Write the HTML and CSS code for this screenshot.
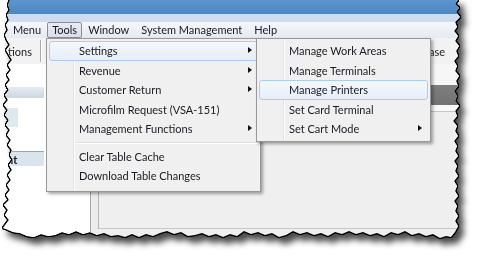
FILE: index.html
```html
<!DOCTYPE html>
<html lang="en">
<head>
    <meta charset="UTF-8">
    <title>Tools menu</title>
    <link rel="stylesheet" href="styles.css">
</head>
<body>

    <div class="sheet">
        <div class="paper">
            <div class="titlebar"></div>
            <div class="frame"></div>
            <div class="menubar">
                <span class="mb-item first">Menu</span>
                <span class="mb-item open">Tools</span>
                <span class="mb-item">Window</span>
                <span class="mb-item">System Management</span>
                <span class="mb-item">Help</span>
            </div>
            <div class="toolbar">
                <span class="tb-btn first">tions</span>
                <span class="tb-sep"></span>
                <span class="tb-btn last">ase</span>
            </div>
            <div class="work">
                <div class="tree">
                    <div class="tree-head"></div>
                    <div class="tree-box"></div>
                    <div class="tree-row">nt</div>
                </div>
                <div class="split"></div>
                <div class="pane">
                    <div class="pane-top"></div>
                    <div class="pane-head"></div>
                    <div class="pane-gap"></div>
                    <div class="pane-body"></div>
                </div>
            </div>

            <!-- Tools dropdown -->
            <div class="menu main-menu">
                <div class="item has-sub active">Settings</div>
                <div class="item has-sub">Revenue</div>
                <div class="item has-sub">Customer Return</div>
                <div class="item">Microfilm Request (VSA-151)</div>
                <div class="item has-sub">Management Functions</div>
                <div class="sep"></div>
                <div class="item">Clear Table Cache</div>
                <div class="item">Download Table Changes</div>
            </div>

            <!-- Settings submenu -->
            <div class="menu sub-menu">
                <div class="item">Manage Work Areas</div>
                <div class="item">Manage Terminals</div>
                <div class="item active">Manage Printers</div>
                <div class="item">Set Card Terminal</div>
                <div class="item has-sub">Set Cart Mode</div>
            </div>
        </div>
    </div>

</body>
</html>
```

FILE: styles.css
```css
body {
    margin: 0;
    background: #fff;
    font-family: Lato, "Open Sans", sans-serif;
    font-size: 11px;
    color: #1a1a22;
}
.sheet {
    width: 483px;
    height: 262px;
    filter: drop-shadow(1px 0 0 #000) drop-shadow(-1px 0 0 #000) drop-shadow(0 1px 0 #000) drop-shadow(0 -1px 0 #000) drop-shadow(5px 6px 3px rgba(0, 0, 0, 0.7));
}
.paper {
    position: relative;
    width: 470px;
    height: 245px;
    background: #efefef;
    display: flex;
    flex-direction: column;
    overflow: hidden;
    clip-path: polygon(9px -4px, 460px -4px, 458px 0px, 455px 4px, 459px 8px, 456px 12px, 460px 17px, 455px 22px, 457px 27px, 454px 31px, 458px 36px, 455px 41px, 459px 46px, 456px 51px, 458px 56px, 454px 61px, 457px 66px, 455px 71px, 459px 76px, 456px 81px, 458px 86px, 454px 91px, 457px 96px, 455px 101px, 459px 106px, 455px 111px, 457px 116px, 453px 121px, 457px 126px, 455px 131px, 458px 136px, 454px 141px, 457px 146px, 455px 151px, 458px 156px, 454px 161px, 457px 166px, 455px 171px, 458px 176px, 454px 181px, 457px 186px, 455px 191px, 458px 196px, 454px 201px, 457px 206px, 455px 211px, 458px 216px, 455px 221px, 458px 226px, 455px 232px, 451px 237px, 446px 236px, 440px 238px, 433px 234px, 426px 236px, 419px 233px, 412px 235px, 405px 231px, 398px 234px, 391px 232px, 384px 236px, 377px 233px, 370px 235px, 363px 232px, 356px 234px, 349px 231px, 342px 234px, 335px 232px, 328px 236px, 321px 233px, 314px 235px, 307px 232px, 300px 234px, 293px 231px, 286px 235px, 279px 237px, 272px 233px, 265px 235px, 258px 232px, 251px 234px, 244px 231px, 237px 236px, 230px 234px, 223px 237px, 216px 234px, 209px 236px, 202px 233px, 195px 235px, 188px 236px, 181px 232px, 174px 234px, 167px 231px, 160px 233px, 153px 236px, 146px 234px, 139px 237px, 132px 234px, 125px 237px, 118px 235px, 111px 236px, 104px 233px, 97px 235px, 90px 232px, 83px 234px, 76px 231px, 69px 234px, 62px 232px, 55px 235px, 48px 236px, 41px 234px, 34px 237px, 27px 236px, 20px 233px, 13px 232px, 6px 229px, 3px 228px, 6px 224px, 9px 220px, 5px 215px, 8px 210px, 4px 205px, 9px 200px, 6px 195px, 10px 190px, 7px 185px, 11px 180px, 8px 175px, 12px 170px, 9px 165px, 13px 160px, 10px 155px, 12px 150px, 8px 145px, 11px 140px, 7px 135px, 10px 130px, 6px 125px, 9px 120px, 5px 115px, 8px 110px, 4px 105px, 8px 100px, 5px 95px, 9px 90px, 6px 85px, 10px 80px, 7px 75px, 11px 70px, 8px 65px, 12px 60px, 9px 55px, 6px 50px, 10px 45px, 7px 40px, 5px 35px, 8px 30px, 6px 25px, 9px 20px, 7px 15px, 10px 10px, 8px 5px, 10px 0px);
}

/* window chrome */
.titlebar {
    height: 14px;
    background: linear-gradient(#5b95ce, #4b87c4);
}
.frame {
    height: 8px;
    background: #cddcee;
}
.menubar {
    height: 16px;
    display: flex;
    align-items: center;
    background: linear-gradient(#f5f7fb, #e4eaf2);
    white-space: nowrap;
}
.mb-item {
    padding: 0 5px;
    line-height: 14px;
    border: 1px solid transparent;
}
.mb-item.first {
    margin-left: 7px;
}
.mb-item.open {
    border-color: #8a8d92;
    border-radius: 2px;
    background: linear-gradient(#e9edf2, #d9dfe7);
    padding: 0 4px;
}

.toolbar {
    height: 26px;
    display: flex;
    align-items: center;
    background: #f2f2f2;
    padding-right: 25px;
    white-space: nowrap;
}
.tb-btn.first {
    margin-left: 8px;
}
.tb-sep {
    width: 1px;
    height: 22px;
    margin-left: 8px;
    background: #a9a9a9;
    box-shadow: 1px 0 0 #fff;
}
.tb-btn.last {
    margin-left: auto;
}

/* workspace under the menus */
.work {
    flex: 1;
    display: grid;
    grid-template-columns: 90px 8px 1fr;
}
.tree {
    background: #fff;
}
.tree-head {
    width: 44px;
    height: 11px;
    margin-top: 23px;
    background: linear-gradient(#e6ecf3, #cbd6e3);
}
.tree-box {
    width: 18px;
    height: 19px;
    margin-top: 10px;
    background: #dee9ef;
}
.tree-row {
    width: 44px;
    height: 15px;
    margin-top: 24px;
    border-top: 1px solid #9aa7b0;
    background: #d9e5ec;
    font-weight: bold;
    line-height: 15px;
    padding-left: 7px;
    box-sizing: border-box;
}
.split {
    border-left: 1px solid #a8a8a8;
    background: #ececec;
}
.pane {
    display: flex;
    flex-direction: column;
    border-left: 1px solid #b4b4b4;
    margin-bottom: 16px;
}
.pane-top {
    height: 21px;
    background: #f6f6f6;
}
.pane-head {
    height: 20px;
    background: linear-gradient(#7e7e7e, #727272);
}
.pane-gap {
    height: 6px;
    background: #f8f8f8;
    border-bottom: 1px solid #c4c4c4;
}
.pane-body {
    flex: 1;
    background: #efefef;
    border-bottom: 1px solid #c8c8c8;
}

/* popup menus */
.menu {
    position: absolute;
    top: 38px;
    padding: 2px 2px 5px;
    border: 1px solid #979797;
    background: #f0f0f0 linear-gradient(90deg, transparent 26px, #e2e3e3 26px, #e2e3e3 27px, #fff 27px, #fff 28px, transparent 28px);
    box-shadow: 2px 2px 3px rgba(0, 0, 0, 0.35);
    white-space: nowrap;
}
.main-menu {
    left: 46px;
    width: 209px;
}
.sub-menu {
    left: 256px;
    width: 169px;
    padding-bottom: 2px;
}
.item {
    position: relative;
    height: 19.5px;
    line-height: 18px;
    padding-left: 29px;
    border: 1px solid transparent;
    border-radius: 3px;
    box-sizing: border-box;
}
.item.active {
    border-color: #aecbeb;
    background: linear-gradient(#f4f8fc, #e6eef8);
}
.has-sub::after {
    content: "";
    position: absolute;
    right: 5px;
    top: 5px;
    border-left: 4px solid #111;
    border-top: 3.5px solid transparent;
    border-bottom: 3.5px solid transparent;
}
.sep {
    height: 1px;
    margin: 3px 0 3px 27px;
    background: #e0e0e0;
    border-bottom: 1px solid #fff;
}
```
